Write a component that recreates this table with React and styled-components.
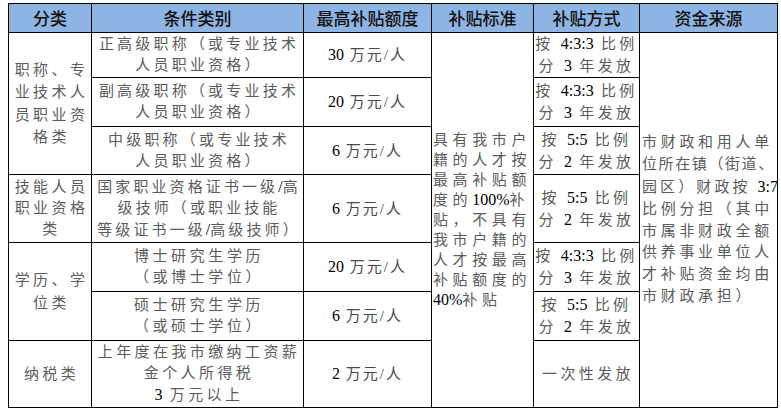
import React from 'react';
import styled, { createGlobalStyle } from 'styled-components';

const GlobalStyle = createGlobalStyle`
  html, body {
    margin: 0;
    padding: 0;
    background: #ffffff;
  }
  body {
    font-family: "Liberation Serif", "Noto Sans CJK SC", serif;
  }
`;

const Page = styled.div`
  padding: 3px 4px 0 8px;
  width: 781px;
  height: 412px;
  box-sizing: border-box;
  background: #ffffff;
`;

const Table = styled.table`
  width: 769px;
  table-layout: fixed;
  border-collapse: collapse;
  border: 1px solid #000;
`;

const Row = styled.tr`
  height: ${(p) => p.$h}px;
`;

const HeadCell = styled.th`
  background: #8db4e2;
  border: 1px solid #000;
  padding: 0;
  font-family: "Noto Sans CJK SC", sans-serif;
  font-size: 17px;
  font-weight: 500;
  color: #111;
  text-align: center;
  vertical-align: middle;
  line-height: 20px;
`;

const Cell = styled.td`
  border: 1px solid #000;
  padding: 0 0 0 ${(p) => p.$pl || 0}px;
  font-size: 15px;
  color: #5c5c5c;
  text-align: ${(p) => p.$align || 'center'};
  vertical-align: middle;
  letter-spacing: ${(p) => p.$ls || 3.2}px;
  line-height: ${(p) => p.$lh || 21}px;
  white-space: nowrap;
  overflow: hidden;
`;

const Num = styled.span`
  font-family: "Liberation Serif", serif;
  font-size: 16px;
  color: #000;
  letter-spacing: 0;
`;

const Squeeze = styled.span`
  letter-spacing: ${(p) => p.$ls}px;
`;

const Amount = styled.span`
  letter-spacing: 2px;
  color: #4a4a4a;
`;

const lines = (arr) =>
  arr.map((l, i) => (
    <React.Fragment key={i}>
      {l}
      {i < arr.length - 1 && <br />}
    </React.Fragment>
  ));

const money = (n) => (
  <Amount>
    <Num>{n}</Num> 万元/人
  </Amount>
);

const ratio433 = [<>按 <Num>4:3:3</Num> 比例</>, <>分 <Num>3</Num> 年发放</>];
const ratio55 = [<>按 <Num>5:5</Num> 比例</>, <>分 <Num>2</Num> 年发放</>];

export default function App() {
  return (
    <Page>
      <GlobalStyle />
      <Table>
        <colgroup>
          <col style={{ width: 83 }} />
          <col style={{ width: 212 }} />
          <col style={{ width: 128 }} />
          <col style={{ width: 102 }} />
          <col style={{ width: 106 }} />
          <col style={{ width: 138 }} />
        </colgroup>
        <thead>
          <Row $h={29}>
            <HeadCell>分类</HeadCell>
            <HeadCell>条件类别</HeadCell>
            <HeadCell>最高补贴额度</HeadCell>
            <HeadCell>补贴标准</HeadCell>
            <HeadCell>补贴方式</HeadCell>
            <HeadCell>资金来源</HeadCell>
          </Row>
        </thead>
        <tbody>
          <Row $h={44}>
            <Cell rowSpan={3} $lh={22.5} $ls={3.4} $pl={3}>
              {lines(['职称、专', '业技术人', '员职业资', '格类'])}
            </Cell>
            <Cell $pl={3}>{lines(['正高级职称（或专业技术', '人员职业资格）'])}</Cell>
            <Cell>{money('30')}</Cell>
            <Cell rowSpan={7} $align="left" $ls={4.6} $lh={20} $pl={1}>
              {lines([
                '具有我市户',
                '籍的人才按',
                '最高补贴额',
                <>度的<Num>100%</Num>补</>,
                '贴，不具有',
                '我市户籍的',
                '人才按最高',
                '补贴额度的',
                <><Num>40%</Num>补贴</>,
              ])}
            </Cell>
            <Cell $ls={3.4} $lh={22}>{lines(ratio433)}</Cell>
            <Cell rowSpan={7} $align="left" $ls={3.7} $lh={21.8} $pl={2}>
              {lines([
                '市财政和用人单',
                <Squeeze $ls={1.6}>位所在镇（街道、</Squeeze>,
                <Squeeze $ls={3.1}>园区）财政按 <Num>3:7</Num></Squeeze>,
                '比例分担（其中',
                '市属非财政全额',
                '供养事业单位人',
                '才补贴资金均由',
                '市财政承担）',
              ])}
            </Cell>
          </Row>
          <Row $h={49}>
            <Cell $pl={3}>{lines(['副高级职称（或专业技术', '人员职业资格）'])}</Cell>
            <Cell>{money('20')}</Cell>
            <Cell $ls={3.4} $lh={22}>{lines(ratio433)}</Cell>
          </Row>
          <Row $h={48}>
            <Cell $pl={3}>{lines(['中级职称（或专业技术', '人员职业资格）'])}</Cell>
            <Cell>{money('6')}</Cell>
            <Cell $ls={3.4} $lh={22}>{lines(ratio55)}</Cell>
          </Row>
          <Row $h={68}>
            <Cell $lh={21} $ls={3.4} $pl={3}>
              {lines(['技能人员', '职业资格', '类'])}
            </Cell>
            <Cell $ls={3.1} $pl={3}>
              {lines([
                <>国家职业资格证书一级<Num>/</Num>高</>,
                '级技师（或职业技能',
                <>等级证书一级<Num>/</Num>高级技师）</>,
              ])}
            </Cell>
            <Cell>{money('6')}</Cell>
            <Cell $ls={3.4} $lh={22}>{lines(ratio55)}</Cell>
          </Row>
          <Row $h={49}>
            <Cell rowSpan={2} $lh={22.5} $ls={3.4} $pl={3}>
              {lines(['学历、学', '位类'])}
            </Cell>
            <Cell $ls={3.6} $pl={3}>{lines(['博士研究生学历', '（或博士学位）'])}</Cell>
            <Cell>{money('20')}</Cell>
            <Cell $ls={3.4} $lh={22}>{lines(ratio433)}</Cell>
          </Row>
          <Row $h={49}>
            <Cell $ls={3.6} $pl={3}>{lines(['硕士研究生学历', '（或硕士学位）'])}</Cell>
            <Cell>{money('6')}</Cell>
            <Cell $ls={3.4} $lh={22}>{lines(ratio55)}</Cell>
          </Row>
          <Row $h={67}>
            <Cell $ls={3.4} $pl={3}>纳税类</Cell>
            <Cell $ls={3.4} $lh={21} $pl={3}>
              {lines(['上年度在我市缴纳工资薪', '金个人所得税', <><Num>3</Num> 万元以上</>])}
            </Cell>
            <Cell>{money('2')}</Cell>
            <Cell $ls={3.4} $pl={3}>一次性发放</Cell>
          </Row>
        </tbody>
      </Table>
    </Page>
  );
}
